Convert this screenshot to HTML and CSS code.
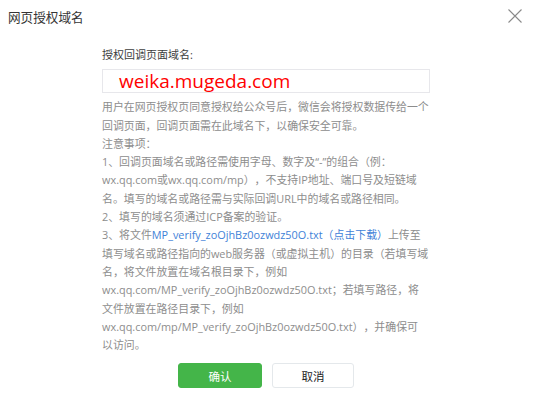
FILE: index.html
```html
<!DOCTYPE html>
<html lang="zh-CN">
<head>
  <meta charset="UTF-8" />
  <meta name="viewport" content="width=device-width, initial-scale=1.0" />
  <title>网页授权域名</title>
  <link rel="stylesheet" href="styles.css">
</head>
<body>
  <div class="dialog">
    <div class="dialog-head">
      <h3 class="dialog-title">网页授权域名</h3>
      <button class="close-btn" aria-label="关闭">
        <svg width="16" height="16" viewBox="0 0 16 16">
          <path d="M1.5 1.5 L14.5 14.5 M14.5 1.5 L1.5 14.5" stroke="#8a8a8a" stroke-width="1.1" fill="none" />
        </svg>
      </button>
    </div>

    <div class="dialog-body">
      <label class="field-label">授权回调页面域名:</label>
      <div class="field-input">weika.mugeda.com</div>
      <p class="tips">
        用户在网页授权页同意授权给公众号后，微信会将授权数据传给一个<br>
        回调页面，回调页面需在此域名下，以确保安全可靠。<br>
        注意事项：<br>
        1、回调页面域名或路径需使用字母、数字及“-”的组合（例：<br>
        wx.qq.com或wx.qq.com/mp），不支持IP地址、端口号及短链域<br>
        名。填写的域名或路径需与实际回调URL中的域名或路径相同。<br>
        2、填写的域名须通过ICP备案的验证。<br>
        3、将文件<a class="link" href="#">MP_verify_zoOjhBz0ozwdz50O.txt（点击下载）</a>上传至<br>
        填写域名或路径指向的web服务器（或虚拟主机）的目录（若填写域<br>
        名，将文件放置在域名根目录下，例如<br>
        wx.qq.com/MP_verify_zoOjhBz0ozwdz50O.txt；若填写路径，将<br>
        文件放置在路径目录下，例如<br>
        wx.qq.com/mp/MP_verify_zoOjhBz0ozwdz50O.txt），并确保可<br>
        以访问。
      </p>
      <div class="dialog-foot">
        <button class="btn btn-primary">确认</button>
        <button class="btn btn-default">取消</button>
      </div>
    </div>
  </div>
</body>
</html>
```

FILE: styles.css
```css
body {
  margin: 0;
  background: #fff;
  font-family: "Segoe UI", "Open Sans", "Noto Sans CJK SC", sans-serif;
  color: #353535;
  text-spacing-trim: space-all;
  font-feature-settings: "chws" 0, "halt" 0;
}
.dialog {
  width: 540px;
  height: 402px;
  background: #fff;
}
.dialog-head {
  display: flex;
  justify-content: space-between;
  align-items: flex-start;
  padding: 8px 17px 0 8px;
  height: 20px;
}
.dialog-title {
  margin: 0;
  font-size: 12.6px;
  font-weight: normal;
  line-height: 20px;
  color: #353535;
}
.close-btn {
  padding: 0;
  border: none;
  background: none;
  width: 16px;
  height: 16px;
  cursor: pointer;
}
.close-btn svg {
  display: block;
}
.dialog-body {
  width: 328px;
  margin-left: 102px;
  padding-top: 18px;
}
.field-label {
  display: block;
  font-size: 11px;
  line-height: 18.3px;
  color: #3e3e3e;
}
.field-input {
  margin-top: 5px;
  height: 22px;
  border: 1px solid #e7e7eb;
  padding-left: 16px;
  font-size: 19px;
  line-height: 22px;
  color: #ff0000;
  white-space: nowrap;
  overflow: hidden;
}
.tips {
  margin: 5px 0 0;
  font-size: 10.9px;
  line-height: 18.3px;
  color: #8d8d8d;
  white-space: nowrap;
}
.link {
  color: #3f82d8;
  text-decoration: none;
}
.dialog-foot {
  display: flex;
  justify-content: center;
  gap: 10px;
  margin-top: 9px;
}
.btn {
  height: 25px;
  border-radius: 3px;
  font-family: inherit;
  font-size: 11.5px;
  padding: 0;
  cursor: pointer;
}
.btn-primary {
  width: 84px;
  background: #44b549;
  border: 1px solid #44b549;
  color: #fff;
}
.btn-default {
  width: 82px;
  background: #fff;
  border: 1px solid #e4e8eb;
  color: #222;
}
```
